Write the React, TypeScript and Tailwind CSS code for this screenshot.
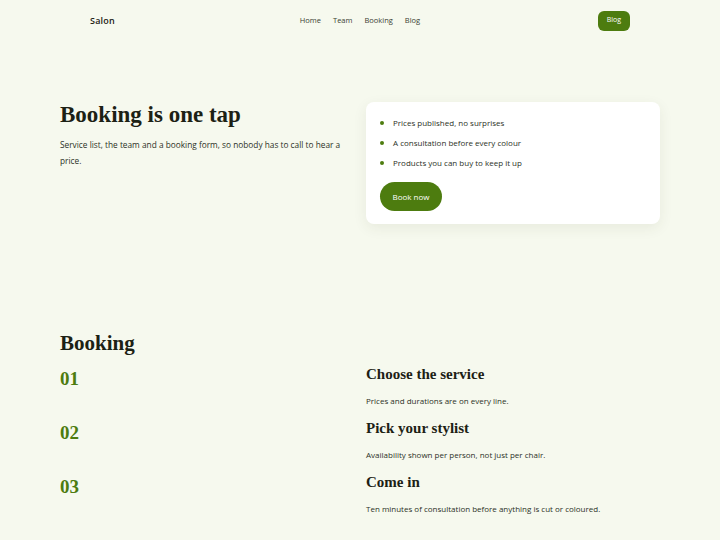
import React from 'react';

const serif = { fontFamily: '"Liberation Serif", "DejaVu Serif", serif' };

const navLinks = ['Home', 'Team', 'Booking', 'Blog'];

const perks = [
    'Prices published, no surprises',
    'A consultation before every colour',
    'Products you can buy to keep it up',
];

const steps = [
    { n: '01', title: 'Choose the service', text: 'Prices and durations are on every line.' },
    { n: '02', title: 'Pick your stylist', text: 'Availability shown per person, not just per chair.' },
    { n: '03', title: 'Come in', text: 'Ten minutes of consultation before anything is cut or coloured.' },
];

const App: React.FC = () => {
    return (
        <div className="min-h-screen bg-[#f6f9ee] text-[#1c2114] font-['Open_Sans',sans-serif]">
            <header className="mx-auto w-[600px] px-[30px] h-[41px] flex items-center justify-between">
                <span className="text-[9px] font-semibold tracking-wide w-[60px]">Salon</span>
                <nav className="flex items-center gap-[12px] text-[7.5px] text-[#3a3f33]">
                    {navLinks.map((l) => (
                        <a key={l} href="#">{l}</a>
                    ))}
                </nav>
                <div className="w-[60px] flex justify-end">
                    <a href="#" className="bg-[#4d7c0f] text-white text-[7px] rounded-md w-[32px] h-[20px] flex items-center justify-center">
                        Blog
                    </a>
                </div>
            </header>

            <main className="mx-auto w-[600px]">
                <section className="grid grid-cols-2 gap-[12px] pt-[61px]">
                    <div>
                        <h1 style={serif} className="text-[23px] font-bold leading-[26px]">Booking is one tap</h1>
                        <p className="text-[8.3px] leading-[16px] text-[#2c3126] mt-[9px] pr-[4px]">
                            Service list, the team and a booking form, so nobody has to call to hear a price.
                        </p>
                    </div>
                    <div className="bg-white rounded-lg shadow-[0_4px_14px_rgba(60,70,40,0.08)] px-[14px] pt-[15px] pb-[13px]">
                        <ul className="flex flex-col gap-[8px]">
                            {perks.map((p) => (
                                <li key={p} className="flex items-center gap-[9px] text-[8px] leading-[12px] text-[#2c3126]">
                                    <span className="w-[4px] h-[4px] rounded-full bg-[#4d7c0f]" />
                                    {p}
                                </li>
                            ))}
                        </ul>
                        <button className="mt-[13px] bg-[#4d7c0f] text-white text-[8px] rounded-full w-[62px] h-[29px]">
                            Book now
                        </button>
                    </div>
                </section>

                <section className="pt-[107px] pb-[20px]">
                    <h2 style={serif} className="text-[21px] font-bold leading-[24px]">Booking</h2>
                    <div className="flex flex-col gap-[11px] mt-[9px]">
                        {steps.map((s) => (
                            <div key={s.n} className="grid grid-cols-2 gap-[12px]">
                                <div style={serif} className="text-[19px] font-bold text-[#4d7c0f] leading-[24px] pt-[3px]">{s.n}</div>
                                <div>
                                    <h3 style={serif} className="text-[15px] font-bold leading-[20px]">{s.title}</h3>
                                    <p className="text-[8px] leading-[12px] text-[#2c3126] mt-[11px]">{s.text}</p>
                                </div>
                            </div>
                        ))}
                    </div>
                </section>
            </main>
        </div>
    );
};

export default App;
